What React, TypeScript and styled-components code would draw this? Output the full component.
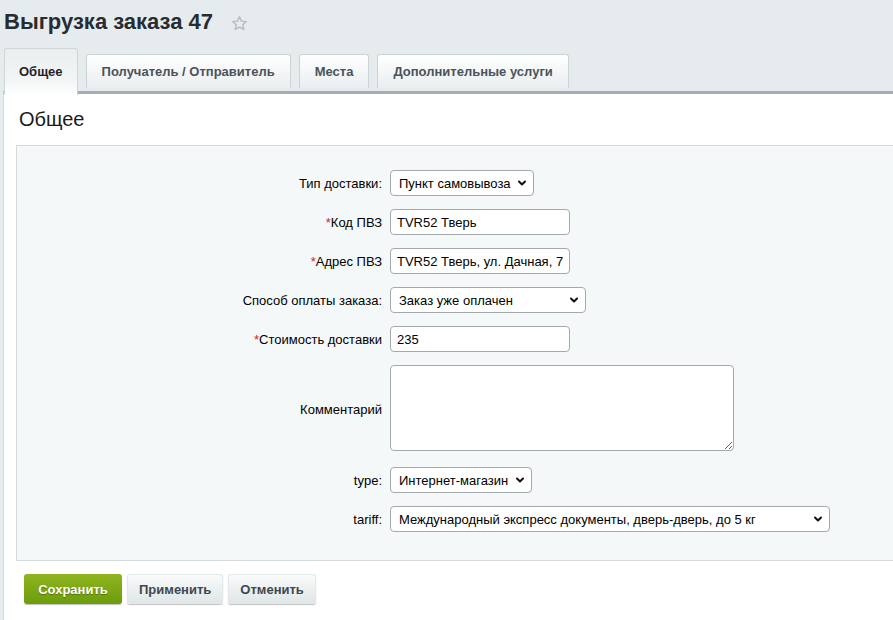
import React from "react";
import styled, { createGlobalStyle } from "styled-components";
import { ChevronDown } from "lucide-react";

const Global = createGlobalStyle`
  html, body { margin: 0; padding: 0; }
  body {
    background: #e6ebed;
    font-family: "Liberation Sans", Arial, sans-serif;
    font-size: 13px;
    color: #000;
    overflow: hidden;
  }
`;

const Page = styled.div`
  height: 620px;
  display: flex;
  flex-direction: column;
`;

const TitleBar = styled.div`
  box-sizing: border-box;
  display: flex;
  align-items: center;
  gap: 18px;
  padding: 8px 0 0 4px;
  height: 36px;
`;

const Title = styled.h1`
  margin: 0;
  font-size: 22px;
  font-weight: bold;
  color: #262c31;
  line-height: 26px;
`;

const Star = styled.span`
  display: inline-flex;
  margin-top: 3px;
  color: #b5bcc0;
`;

const Tabs = styled.div`
  display: flex;
  align-items: flex-end;
  gap: 8px;
  padding-left: 4px;
  margin-top: 12px;
  position: relative;
  z-index: 1;
`;

const Tab = styled.div<{ $active?: boolean }>`
  box-sizing: border-box;
  display: flex;
  align-items: center;
  justify-content: center;
  font-weight: bold;
  font-size: 13px;
  border: 1px solid #ccd3d6;
  border-bottom: none;
  border-radius: 3px 3px 0 0;
  ${(p) =>
    p.$active
      ? `
    height: 47px;
    margin-bottom: -4px;
    padding: 0 14px 2px;
    color: #1f2428;
    background: linear-gradient(#e9eef0, #f3f6f7 70%, #ffffff);
    border-color: #cfd6d8;
  `
      : `
    height: 34px;
    margin-bottom: 3px;
    padding: 0 15px;
    color: #4a5359;
    background: linear-gradient(#ffffff, #e9eef0);
  `}
`;

const Panel = styled.div`
  flex: 1;
  margin-left: 3px;
  background: #fff;
  border-left: 1px solid #d6dcde;
  border-top: 3px solid #a3acb0;
  padding: 0 0 0 12px;
  display: flex;
  flex-direction: column;
`;

const Heading = styled.h2`
  box-sizing: border-box;
  margin: 0;
  font-size: 20px;
  font-weight: normal;
  color: #1a1a1a;
  padding: 13px 0 0 3px;
  line-height: 24px;
  height: 51px;
`;

const FormBox = styled.div`
  background: #f5f8f9;
  border: 1px solid #d5dbdd;
  border-right: none;
  padding: 24px 0 28px;
  display: grid;
  grid-template-columns: 365px auto;
  column-gap: 8px;
  row-gap: 13px;
  align-items: center;
  justify-items: start;
`;

const Label = styled.label`
  justify-self: end;
  text-align: right;
  font-size: 13px;
  color: #000;
`;

const Req = styled.span`
  color: #d2232a;
`;

const fieldBase = `
  box-sizing: border-box;
  height: 26px;
  font-family: "Liberation Sans", Arial, sans-serif;
  font-size: 13px;
  color: #000;
  background: #fff;
  border: 1px solid #a4a9ad;
  border-radius: 4px;
  outline: none;
`;

const TextInput = styled.input<{ $w: number }>`
  ${fieldBase}
  width: ${(p) => p.$w}px;
  padding: 0 6px;
`;

const SelectWrap = styled.div<{ $w: number }>`
  position: relative;
  width: ${(p) => p.$w}px;
  display: flex;
`;

const Select = styled.select`
  ${fieldBase}
  width: 100%;
  appearance: none;
  -webkit-appearance: none;
  padding: 0 14px 0 8px;
`;

const Arrow = styled.span`
  position: absolute;
  right: 6px;
  top: 7px;
  display: flex;
  pointer-events: none;
  color: #111;
`;

const TextArea = styled.textarea`
  ${fieldBase}
  width: 344px;
  height: 86px;
  resize: both;
  margin-bottom: 3px;
`;

const Buttons = styled.div`
  display: flex;
  gap: 5px;
  padding: 13px 0 0 8px;
`;

const Button = styled.button<{ $primary?: boolean }>`
  box-sizing: border-box;
  height: 30px;
  padding: 0 12px;
  border-radius: 3px;
  font-family: "Liberation Sans", Arial, sans-serif;
  font-size: 13px;
  font-weight: bold;
  cursor: pointer;
  border: none;
  ${(p) =>
    p.$primary
      ? `
    width: 98px;
    color: #fff;
    background: linear-gradient(#8fb41f, #6d9c0c);
    text-shadow: 0 1px 1px rgba(60, 80, 0, 0.6);
    box-shadow: 0 1px 1px rgba(0,0,0,0.25);
  `
      : `
    color: #3e474e;
    background: linear-gradient(#fafbfb, #dfe5e7);
    box-shadow: 0 1px 1px rgba(0,0,0,0.25), inset 0 0 0 1px #e3e8ea;
  `}
`;

type SelProps = { w: number; value: string };
const Sel = ({ w, value }: SelProps) => (
  <SelectWrap $w={w}>
    <Select defaultValue={value}>
      <option>{value}</option>
    </Select>
    <Arrow>
      <ChevronDown size={12} strokeWidth={4} />
    </Arrow>
  </SelectWrap>
);

export default function App() {
  return (
    <Page>
      <Global />
      <TitleBar>
        <Title>Выгрузка заказа 47</Title>
        <Star>
          <svg width="17" height="17" viewBox="0 0 24 24" fill="none" stroke="currentColor" strokeWidth="2" strokeLinejoin="round">
            <polygon points="12,2.5 14.9,8.6 21.5,9.3 16.6,13.8 18,20.4 12,17 6,20.4 7.4,13.8 2.5,9.3 9.1,8.6" />
          </svg>
        </Star>
      </TitleBar>
      <Tabs>
        <Tab $active>Общее</Tab>
        <Tab>Получатель / Отправитель</Tab>
        <Tab>Места</Tab>
        <Tab>Дополнительные услуги</Tab>
      </Tabs>
      <Panel>
        <Heading>Общее</Heading>
        <FormBox>
          <Label>Тип доставки:</Label>
          <Sel w={144} value="Пункт самовывоза" />

          <Label><Req>*</Req>Код ПВЗ</Label>
          <TextInput $w={180} defaultValue="TVR52 Тверь" />

          <Label><Req>*</Req>Адрес ПВЗ</Label>
          <TextInput $w={180} defaultValue="TVR52 Тверь, ул. Дачная, 70" />

          <Label>Способ оплаты заказа:</Label>
          <Sel w={196} value="Заказ уже оплачен" />

          <Label><Req>*</Req>Стоимость доставки</Label>
          <TextInput $w={180} defaultValue="235" />

          <Label>Комментарий</Label>
          <TextArea />

          <Label>type:</Label>
          <Sel w={142} value="Интернет-магазин" />

          <Label>tariff:</Label>
          <Sel w={440} value="Международный экспресс документы, дверь-дверь, до 5 кг" />
        </FormBox>
        <Buttons>
          <Button $primary>Сохранить</Button>
          <Button>Применить</Button>
          <Button>Отменить</Button>
        </Buttons>
      </Panel>
    </Page>
  );
}
